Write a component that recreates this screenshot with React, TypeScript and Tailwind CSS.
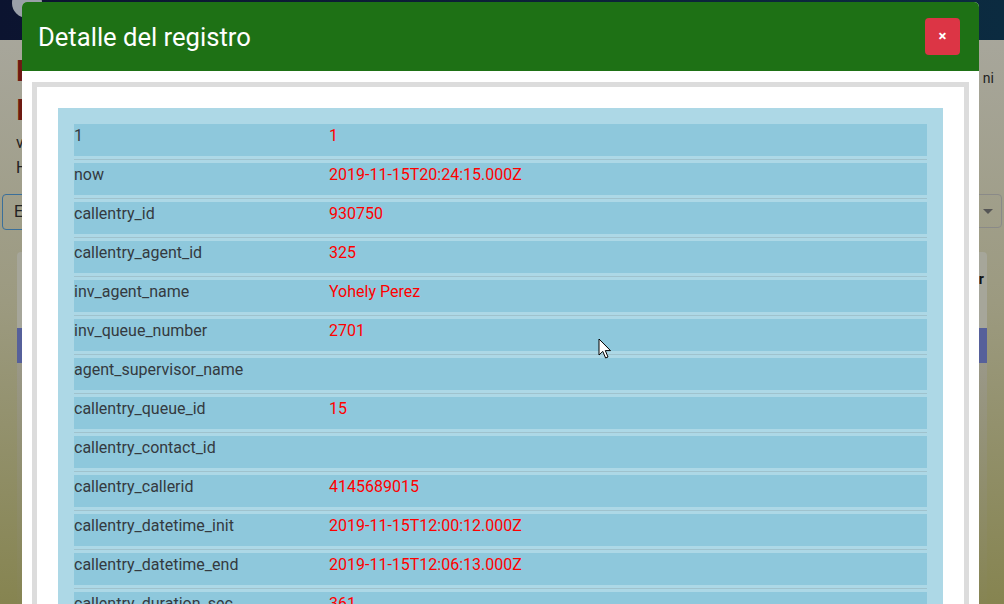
import React from "react";

const rows: [string, string][] = [
  ["1", "1"],
  ["now", "2019-11-15T20:24:15.000Z"],
  ["callentry_id", "930750"],
  ["callentry_agent_id", "325"],
  ["inv_agent_name", "Yohely Perez"],
  ["inv_queue_number", "2701"],
  ["agent_supervisor_name", ""],
  ["callentry_queue_id", "15"],
  ["callentry_contact_id", ""],
  ["callentry_callerid", "4145689015"],
  ["callentry_datetime_init", "2019-11-15T12:00:12.000Z"],
  ["callentry_datetime_end", "2019-11-15T12:06:13.000Z"],
  ["callentry_duration_sec", "361"],
];

function BackgroundPage() {
  return (
    <div className="flex h-full w-full flex-col bg-gradient-to-b from-[#a9a89f] via-[#9c9a80] to-[#868450]">
      <div className="flex h-[40px] shrink-0 items-start bg-gradient-to-r from-[#0c1430] to-[#0b2b40]">
        <div className="ml-[12px] mt-[-12px] h-[30px] w-[30px] rounded-full bg-[#9aa0a8]" />
      </div>
      <div className="flex flex-1 flex-col px-[16px] pt-[12px]">
        <div className="flex justify-between">
          <div className="flex flex-col">
            <div className="text-[30px] leading-[38px] font-bold text-[#6e1a12]">F</div>
            <div className="text-[30px] leading-[40px] font-bold text-[#6e1a12]">I</div>
            <div className="text-[16px] leading-[26px] text-[#222]">v</div>
            <div className="text-[16px] leading-[24px] text-[#222]">H</div>
          </div>
          <div className="mt-[16px] mr-[-6px] text-[14px] text-[#222]">ni</div>
        </div>
        <div className="mt-[14px] flex justify-between">
          <div className="ml-[-14px] flex h-[36px] w-[60px] items-center rounded-[4px] border border-[#3a6f9a] pl-[11px] text-[16px] text-[#222]">
            E
          </div>
          <div className="mr-[-14px] flex h-[34px] w-[60px] items-center justify-end rounded-[4px] border border-[#8a8a88] pr-[8px]">
            <div className="h-0 w-0 border-x-[5px] border-t-[5px] border-x-transparent border-t-[#555]" />
          </div>
        </div>
        <div className="mt-[22px] mx-[1px] flex flex-1 flex-col rounded-t-[4px] bg-[#a6a69a]">
          <div className="flex h-[50px] items-center justify-end pr-[3px] pt-[4px] text-[14px] font-bold text-[#111]">r</div>
          <div className="mt-[26px] h-[35px] bg-[#56609a]" />
          <div className="flex-1 bg-gradient-to-b from-[#9a9888] to-[#868452]" />
        </div>
      </div>
    </div>
  );
}

function Cursor() {
  return (
    <svg
      className="absolute left-[598px] top-[338px]"
      width="14"
      height="22"
      viewBox="0 0 14 22"
    >
      <path
        d="M1 1 L1 17 L4.8 13.4 L7.6 20 L10 19 L7.3 12.6 L12.5 12.6 Z"
        fill="#ffffff"
        stroke="#000000"
        strokeWidth="1"
        strokeLinejoin="round"
      />
    </svg>
  );
}

export default function App() {
  return (
    <div className="relative h-[604px] w-[1004px] overflow-hidden font-['Roboto',sans-serif]">
      <BackgroundPage />
      <div className="absolute left-[22px] top-[2px] w-[957px] overflow-hidden rounded-t-[5px] bg-white">
        <div className="flex h-[69px] items-center justify-between bg-[#1e7115] pl-[16px] pr-[19px]">
          <div className="text-[25.6px] leading-[30px] text-white">Detalle del registro</div>
          <button className="flex h-[37px] w-[35px] items-center justify-center rounded-[4px] bg-[#dc3545] text-[15px] font-bold leading-none text-white">
            ×
          </button>
        </div>
        <div className="px-[10px] pt-[11px]">
          <div className="border-[5px] border-[#dcdcdc] bg-white p-[21px] pb-0">
            <div className="bg-[#add8e6] p-[16px]">
              {rows.map(([k, v], i) => (
                <div key={i}>
                  <div className="flex h-[32px] bg-[#8ec8dc] text-[16px] leading-[24px]">
                    <div className="w-[255px] shrink-0 text-[#343a40]">{k}</div>
                    <div className="text-[#ff0000]">{v}</div>
                  </div>
                  <div className="my-[3px] h-px bg-[#9fc2cd]" />
                </div>
              ))}
            </div>
          </div>
        </div>
      </div>
      <Cursor />
    </div>
  );
}
